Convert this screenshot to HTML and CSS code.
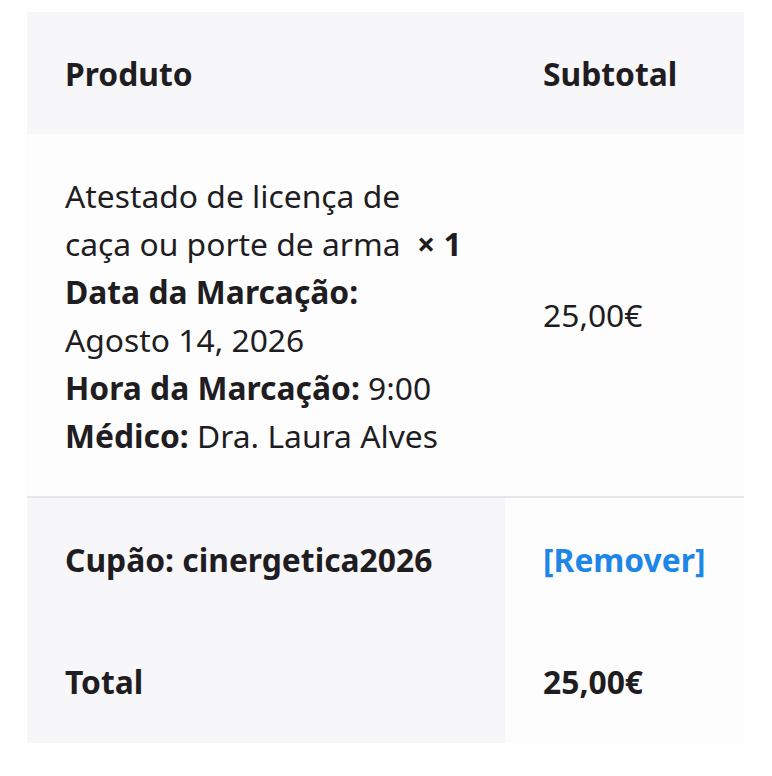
FILE: index.html
```html
<!DOCTYPE html>
<html lang="pt">
<head>
<meta charset="utf-8">
<title>Encomenda</title>
<link rel="stylesheet" href="styles.css">
</head>
<body>
<table class="order-table">
  <thead>
    <tr>
      <th class="col-product">Produto</th>
      <th class="col-total">Subtotal</th>
    </tr>
  </thead>
  <tbody>
    <tr class="item-row">
      <td class="col-product">Atestado de licença de caça ou porte de arma&nbsp; <strong>×&nbsp;1</strong>
        <div class="meta"><strong>Data da Marcação:</strong> Agosto 14, 2026</div>
        <div class="meta"><strong>Hora da Marcação:</strong> 9:00</div>
        <div class="meta"><strong>Médico:</strong> Dra. Laura Alves</div>
      </td>
      <td class="col-total">25,00€</td>
    </tr>
  </tbody>
  <tfoot>
    <tr class="foot-row first">
      <th class="col-product">Cupão: cinergetica2026</th>
      <td class="col-total"><a href="#" class="remove">[Remover]</a></td>
    </tr>
    <tr class="foot-row">
      <th class="col-product">Total</th>
      <td class="col-total"><strong>25,00€</strong></td>
    </tr>
  </tfoot>
</table>
</body>
</html>
```
FILE: styles.css
```css
html, body {
  margin: 0;
  padding: 0;
  background: #ffffff;
}
body {
  padding: 12px 28px 0 27px;
  font-family: "Noto Sans", "Open Sans", sans-serif;
  font-size: 31.8px;
  line-height: 48px;
  color: #1f1d22;
}
.order-table {
  width: 717px;
  border-collapse: collapse;
  border-spacing: 0;
  table-layout: fixed;
}
.order-table th,
.order-table td {
  padding: 37px 38px;
  text-align: left;
  vertical-align: middle;
}
.order-table .col-product {
  width: 402px;
}
.order-table thead th {
  background: #f7f6f9;
  font-weight: 700;
  padding-top: 38px;
  padding-bottom: 36px;
}
.order-table strong {
  font-weight: 700;
}
.item-row td {
  background: #fdfdfe;
  border-bottom: 2px solid #e7e6eb;
}
.item-row td.col-product {
  padding-top: 38px;
  padding-bottom: 36px;
}
.meta {
  margin: 0;
}
.foot-row th {
  background: #f7f6f9;
  font-weight: 700;
}
.foot-row td {
  background: #fdfdfe;
}
.foot-row.first th,
.foot-row.first td {
  padding-top: 38px;
}
.remove {
  color: #1e86e6;
  font-weight: 700;
  text-decoration: none;
}
```
